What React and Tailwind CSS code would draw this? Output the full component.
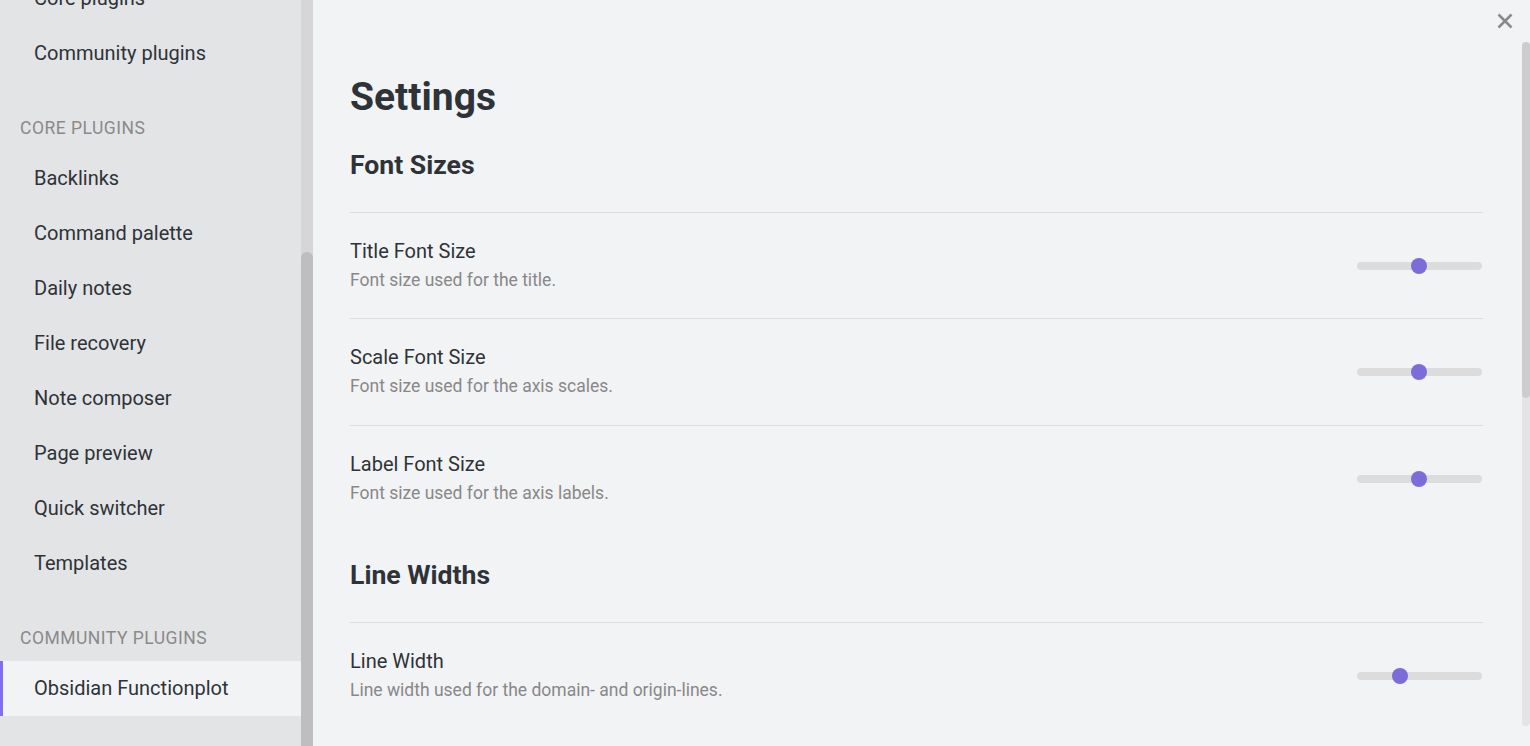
import React from 'react';

const corePlugins = [
  'Backlinks',
  'Command palette',
  'Daily notes',
  'File recovery',
  'Note composer',
  'Page preview',
  'Quick switcher',
  'Templates',
];

const NavItem = ({ label, active }) => (
  <div
    className={
      active
        ? 'h-[55px] flex items-center pl-[31px] text-[20px] text-[#2e3338] bg-[#f2f3f5] border-l-[3px] border-[#7f6df2]'
        : 'h-[55px] flex items-center pl-[34px] text-[20px] text-[#2e3338]'
    }
  >
    {label}
  </div>
);

const NavHeader = ({ label }) => (
  <div className="pt-[37px] pb-[13px] pl-[20px] leading-[20px] text-[17.5px] uppercase tracking-[0.5px] text-[#8a8a8a]">
    {label}
  </div>
);

const Slider = ({ pos }) => (
  <div className="relative mt-[23px] w-[125px] h-[8px] rounded-full bg-[#dcdcdc] mr-[1px]">
    <div
      className="absolute top-1/2 w-[16px] h-[16px] -mt-[8px] -ml-[8px] rounded-full bg-[#7b6cd9]"
      style={{ left: pos }}
    />
  </div>
);

const SettingItem = ({ name, desc, pos }) => (
  <div className="flex items-start justify-between border-t border-[#dddddf] pt-[26px] pb-[27.5px]">
    <div>
      <div className="text-[20px] leading-[24px] text-[#2e3338]">{name}</div>
      <div className="mt-[6px] text-[17.5px] leading-[22px] text-[#888888]">{desc}</div>
    </div>
    <Slider pos={pos} />
  </div>
);

const SectionHeading = ({ children }) => (
  <h2 className="mt-[28px] mb-[30.5px] text-[26.6px] leading-[32px] font-bold text-[#2e3338]">
    {children}
  </h2>
);

export default function App() {
  return (
    <div
      className="flex w-[1530px] h-[746px] overflow-hidden"
      style={{ fontFamily: 'Roboto, "Noto Sans", sans-serif' }}
    >
      {/* Sidebar */}
      <div className="w-[301px] bg-[#e3e4e6] flex flex-col">
        <div className="-mt-[29.5px]">
          <NavItem label="Core plugins" />
          <NavItem label="Community plugins" />
          <NavHeader label="Core plugins" />
          {corePlugins.map((p) => (
            <NavItem key={p} label={p} />
          ))}
          <NavHeader label="Community plugins" />
          <NavItem label="Obsidian Functionplot" active />
        </div>
      </div>
      <div className="w-[12px] bg-[#d6d6d8] flex flex-col">
        <div className="h-[252px]" />
        <div className="flex-1 bg-[#bebec0] rounded-t-[6px]" />
      </div>

      {/* Main */}
      <div className="flex-1 bg-[#f2f3f5] relative flex">
        <button className="absolute right-[17px] top-[13px] w-[16px] h-[16px] text-[#8a8a8a]">
          <svg viewBox="0 0 16 16" width="16" height="16" fill="none" stroke="currentColor" strokeWidth="2.6">
            <path d="M1.5 1.5 L14.5 14.5 M14.5 1.5 L1.5 14.5" />
          </svg>
        </button>
        <div className="flex-1 pl-[37px] pr-[39px] pt-[73px]">
          <h1 className="text-[39px] leading-[48px] font-bold text-[#2e3338]">Settings</h1>
          <SectionHeading>Font Sizes</SectionHeading>
          <SettingItem name="Title Font Size" desc="Font size used for the title." pos={62} />
          <SettingItem name="Scale Font Size" desc="Font size used for the axis scales." pos={62} />
          <SettingItem name="Label Font Size" desc="Font size used for the axis labels." pos={62} />
          <SectionHeading>Line Widths</SectionHeading>
          <SettingItem
            name="Line Width"
            desc="Line width used for the domain- and origin-lines."
            pos={43}
          />
        </div>
        <div className="w-[8px] mt-[42px] mb-[20px] rounded-[4px] bg-[#e4e4e6] flex flex-col">
          <div className="h-[356px] rounded-[4px] bg-[#cdcdcf]" />
        </div>
      </div>
    </div>
  );
}
